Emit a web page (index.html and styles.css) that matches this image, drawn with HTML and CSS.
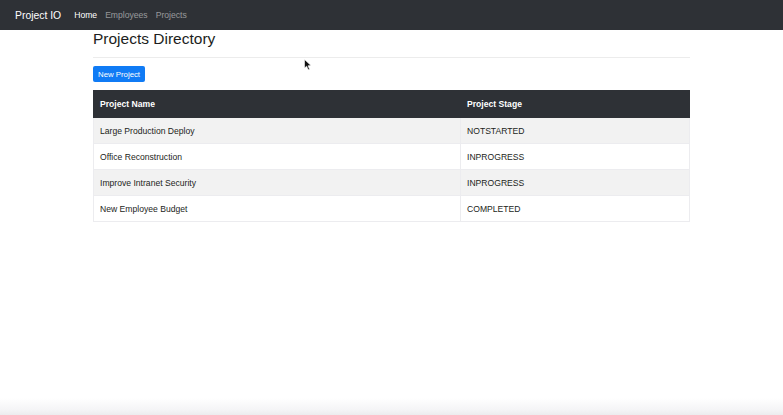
FILE: index.html
```html
<!DOCTYPE html>
<html>
<head>
<meta charset="utf-8">
<link rel="stylesheet" href="styles.css">
</head>
<body>
<nav class="navbar">
  <span class="brand">Project IO</span>
  <div class="nav-links">
    <a class="nav-link active">Home</a>
    <a class="nav-link">Employees</a>
    <a class="nav-link">Projects</a>
  </div>
</nav>
<main class="container">
  <h2 class="title">Projects Directory</h2>
  <hr class="divider">
  <button class="btn">New Project</button>
  <table class="table">
    <thead>
      <tr><th class="col-name">Project Name</th><th>Project Stage</th></tr>
    </thead>
    <tbody>
      <tr class="odd"><td>Large Production Deploy</td><td>NOTSTARTED</td></tr>
      <tr><td>Office Reconstruction</td><td>INPROGRESS</td></tr>
      <tr class="odd"><td>Improve Intranet Security</td><td>INPROGRESS</td></tr>
      <tr><td>New Employee Budget</td><td>COMPLETED</td></tr>
    </tbody>
  </table>
</main>
<svg class="cursor" width="8" height="12" viewBox="0 0 8 12"><path d="M0.5 0.5 L0.5 9 L2.6 7.2 L4.2 10.8 L5.6 10.2 L4 6.8 L7 6.6 Z" fill="#111" stroke="#fff" stroke-width="0.6"/></svg>
</body>
</html>
```
FILE: styles.css
```css
html {
  height: 100%;
  background: linear-gradient(to bottom, #ffffff 0, #ffffff 398px, #f4f4f6 410px, #ececee 415px);
}
body {
  margin: 0;
  font-family: "Liberation Sans", Arial, sans-serif;
  font-size: 8.6px;
  color: #1c1e21;
  position: relative;
  min-height: 415px;
}
.navbar {
  height: 30px;
  box-sizing: border-box;
  padding: 0 15px;
  display: flex;
  align-items: center;
  background: #2e3136;
}
.brand {
  color: #fff;
  font-size: 10.4px;
  margin-right: 13px;
}
.nav-links {
  display: flex;
  gap: 8px;
}
.nav-link {
  color: rgba(255, 255, 255, 0.5);
  font-size: 8.6px;
}
.nav-link.active {
  color: #fff;
}
.container {
  width: 597px;
  margin: 0 auto;
}
.title {
  margin: 0;
  font-size: 15.5px;
  font-weight: 500;
  line-height: 18px;
  color: #1c1e21;
}
.divider {
  margin: 9px 0 0;
  border: 0;
  border-top: 1px solid #ececec;
}
.btn {
  display: block;
  margin-top: 8px;
  height: 16px;
  padding: 0 5px;
  background: #107bf5;
  color: #fff;
  border: 0;
  border-radius: 2px;
  font-family: "Liberation Sans", Arial, sans-serif;
  font-size: 7.8px;
}
.table {
  margin-top: 8px;
  width: 100%;
  border-collapse: collapse;
}
.table th, .table td {
  text-align: left;
  padding: 0 6px;
  height: 25px;
  border: 1px solid #ececef;
}
.table th {
  background: #2e3136;
  color: #fff;
  font-weight: bold;
  height: 26px;
  border-color: #2e3136;
}
.col-name {
  width: 354px;
}
.table tr.odd td {
  background: #f2f2f2;
}
.cursor {
  position: absolute;
  left: 304px;
  top: 59px;
}
```
